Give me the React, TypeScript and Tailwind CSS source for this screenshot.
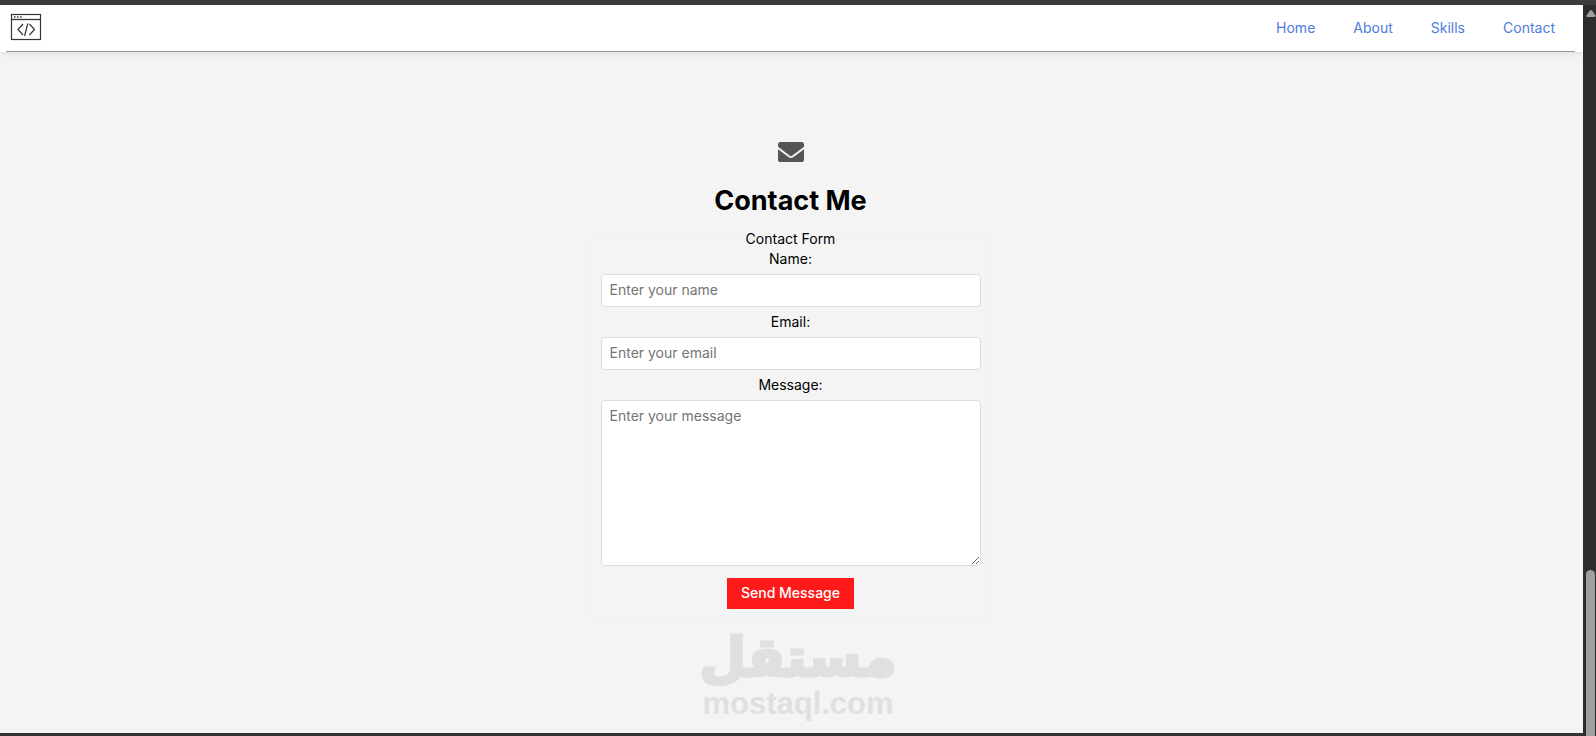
import type { FormEvent } from "react";

const links = [
  { label: "Home", href: "#home" },
  { label: "About", href: "#about" },
  { label: "Skills", href: "#skills" },
  { label: "Contact", href: "#contact" },
];

function Logo() {
  return (
    <svg width="32" height="28" viewBox="0 0 32 28" fill="none" stroke="#3a3336" aria-hidden="true">
      <rect x="1.5" y="1.5" width="29" height="25" strokeWidth="1.2" />
      <path d="M1.5 6.5h29" strokeWidth="1.3" />
      <path d="M4 4h1.5M7 4h1.5M10 4h1.5" strokeWidth="1.3" />
      <path d="M13 11l-5 5.5 5 5.5M19.5 11l5 5.5-5 5.5M17.8 10.5l-3.2 12.5" strokeWidth="1.2" />
    </svg>
  );
}

function Envelope() {
  return (
    <svg width="26" height="20" viewBox="0 0 26 20" fill="none" aria-hidden="true">
      <rect width="26" height="20" rx="2.6" fill="#555555" />
      <path d="M-1 5.2L11 14.2Q13 15.6 15 14.2L27 5.2" stroke="#f4f4f4" strokeWidth="2" />
    </svg>
  );
}

function Navbar() {
  return (
    <header className="bg-white pl-1.5 pr-2 shadow-md shadow-black/5">
      <div className="flex h-[47px] items-center justify-between border-b border-[#999999] pl-1 pr-5">
        <a href="#home" aria-label="Home" className="pb-0.5">
          <Logo />
        </a>
        <nav className="flex gap-[38px] text-[#4f7bdb]">
          {links.map((link) => (
            <a key={link.label} href={link.href} className="hover:underline">
              {link.label}
            </a>
          ))}
        </nav>
      </div>
    </header>
  );
}

function ContactForm() {
  const handleSubmit = (e: FormEvent) => {
    e.preventDefault();
  };

  return (
    <form onSubmit={handleSubmit} className="w-full max-w-[400px]">
      <fieldset className="flex flex-col items-center border border-[#f0f0f0] px-[9px] pb-2">
        <legend className="mx-auto">Contact Form</legend>

        <label htmlFor="name">Name:</label>
        <input
          id="name"
          type="text"
          placeholder="Enter your name"
          className="mt-[5px] h-[33px] w-full rounded border border-[#dddddd] bg-white px-2 pb-0.5 placeholder-[#757575]"
        />

        <label htmlFor="email" className="mt-[5px]">Email:</label>
        <input
          id="email"
          type="email"
          placeholder="Enter your email"
          className="mt-[5px] h-[33px] w-full rounded border border-[#dddddd] bg-white px-2 pb-0.5 placeholder-[#757575]"
        />

        <label htmlFor="message" className="mt-[5px]">Message:</label>
        <textarea
          id="message"
          placeholder="Enter your message"
          className="mt-[5px] h-[166px] w-full resize rounded border border-[#dddddd] bg-white px-2 py-[5px] placeholder-[#757575]"
        />

        <button type="submit" className="mt-3 h-[31px] bg-[#ff1a1a] px-3.5 pb-0.5 font-medium text-white">
          Send Message
        </button>
      </fieldset>
    </form>
  );
}

function Scrollbar() {
  return (
    <div className="flex w-[13px] shrink-0 flex-col items-center bg-[#2c2c2c] pl-0.5 pt-1" aria-hidden="true">
      <svg width="10" height="9" viewBox="0 0 10 9" fill="#9f9f9f">
        <path d="M4 1.5Q5 0.5 6 1.5L9.5 6.5Q9.8 8 8.5 8H1.5Q0.2 8 0.5 6.5Z" />
      </svg>
      <div className="mt-auto h-[166px] w-[9px] rounded-t-full bg-[#9f9f9f]" />
    </div>
  );
}

function Watermark() {
  return (
    <div className="pointer-events-none absolute inset-x-0 bottom-4 flex flex-col items-center font-bold text-[#e0e0e0]">
      <span
        lang="ar"
        dir="rtl"
        className="font-['DejaVu_Sans',sans-serif] text-[54px] leading-[60px] [-webkit-text-stroke:3px_#e0e0e0]"
      >
        مستقل
      </span>
      <span className="font-['Liberation_Sans',sans-serif] text-[31px] leading-8">mostaql.com</span>
    </div>
  );
}

export default function App() {
  return (
    <div className="relative flex min-h-screen flex-col border-t-[5px] border-[#3c3c3c] font-['Inter',sans-serif] text-sm text-black">
      <div className="flex flex-1">
        <div className="flex flex-1 flex-col border-b-[3px] border-[#333333] bg-[#f4f4f4]">
          <Navbar />
          <main id="contact" className="flex flex-col items-center pl-4 pr-[18px] pt-[90px]">
            <Envelope />
            <h1 className="mb-2 mt-[19px] text-[27px] font-bold leading-10">Contact Me</h1>
            <ContactForm />
          </main>
        </div>
        <Scrollbar />
      </div>
      <Watermark />
    </div>
  );
}
